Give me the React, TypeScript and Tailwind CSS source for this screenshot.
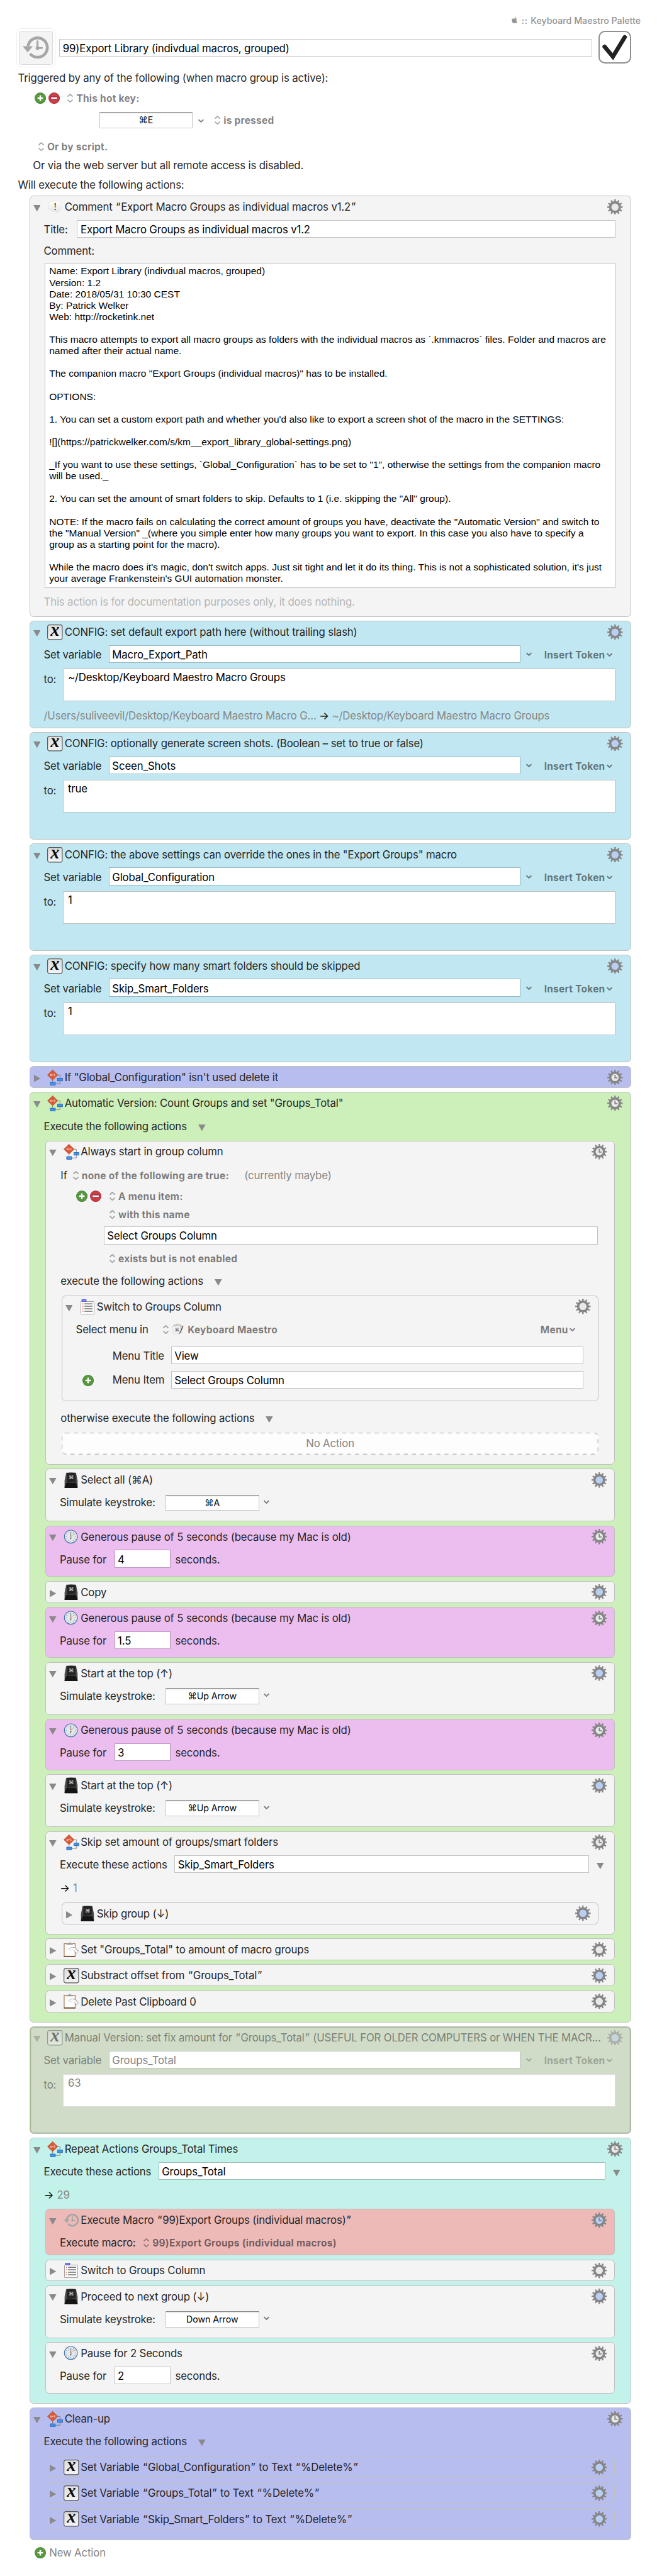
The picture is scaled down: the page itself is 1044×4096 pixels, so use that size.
import React from "react";
import { FaApple } from "react-icons/fa";

/* ---------- glyphs ---------- */

type Center = "plain" | "blue" | "clock" | "blueclock";

function Gear({ kind }: { kind: Center }) {
  const blue = kind === "blue" || kind === "blueclock";
  const clock = kind === "clock" || kind === "blueclock";
  return (
    <svg viewBox="0 0 38 38" className="h-[19px] w-[19px] shrink-0">
      {Array.from({ length: 12 }, (_, i) => (
        <rect key={i} x="17.2" y="0" width="3.6" height="8" fill="#868686" transform={`rotate(${i * 30} 19 19)`} />
      ))}
      <circle cx="19" cy="19" r="11.8" fill={blue ? "#b8cff3" : "#e9e9e9"} stroke="#868686" strokeWidth="5.6" />
      {clock && <path d="M19 12.5V20H25" fill="none" stroke="#868686" strokeWidth="2.8" />}
    </svg>
  );
}

function Down({ className = "" }: { className?: string }) {
  return (
    <svg viewBox="0 0 9 8" className={`h-[8px] w-[9px] shrink-0 ${className}`}>
      <path d="M0 0H9L4.5 8Z" fill="#8a8a8a" />
    </svg>
  );
}

function Right() {
  return (
    <svg viewBox="0 0 8 9" className="ml-[1px] h-[9px] w-[8px] shrink-0">
      <path d="M0 0V9L8 4.5Z" fill="#8a8a8a" />
    </svg>
  );
}

function Chevron({ className = "" }: { className?: string }) {
  return (
    <svg viewBox="0 0 7 5" className={`h-[5px] w-[7px] shrink-0 ${className}`}>
      <path d="M0.5 0.9L3.5 3.8L6.5 0.9" fill="none" stroke="#000" strokeOpacity="0.48" strokeWidth="1.6" />
    </svg>
  );
}

function UpDown({ className = "" }: { className?: string }) {
  return (
    <svg viewBox="0 0 7 11" className={`h-[11px] w-[7px] shrink-0 ${className}`}>
      <path d="M0.4 3.5L3.5 0.7L6.6 3.5M0.4 7.5L3.5 10.3L6.6 7.5" fill="none" stroke="#000" strokeOpacity="0.36" strokeWidth="1.3" />
    </svg>
  );
}

function Plus() {
  return (
    <svg viewBox="0 0 28 28" className="h-[14px] w-[14px] shrink-0">
      <circle cx="14" cy="14" r="13" fill="#5b9a3b" stroke="#4a8a3e" strokeWidth="2" />
      <path d="M10.5 5.5h7v5h5v7h-5v5h-7v-5h-5v-7h5z" fill="#478536" />
      <path d="M12 7h4v5h5v4h-5v5h-4v-5H7v-4h5z" fill="#fff" />
    </svg>
  );
}

function Minus() {
  return (
    <svg viewBox="0 0 28 28" className="h-[14px] w-[14px] shrink-0">
      <circle cx="14" cy="14" r="13" fill="#c64243" stroke="#b93045" strokeWidth="2" />
      <rect x="5" y="9.5" width="18" height="9" fill="#b02a3f" />
      <rect x="6.5" y="12" width="15" height="4" fill="#fff" />
    </svg>
  );
}

function HistoryIcon({ className }: { className: string }) {
  return (
    <svg viewBox="0 0 64 55" className={className}>
      <path d="M13.2 24A23.8 23.8 0 1 1 18.3 42.3" fill="none" stroke="#a6a6a6" strokeWidth="7" />
      <path d="M0 24H25L12.5 39Z" fill="#a6a6a6" />
      <circle cx="36.5" cy="28.5" r="4.6" fill="#a6a6a6" />
      <path d="M36.5 28V12M36 28.3H47.5" stroke="#a6a6a6" strokeWidth="4.6" strokeLinecap="round" />
    </svg>
  );
}

function XIcon() {
  return (
    <svg viewBox="0 0 38 38" className="h-[19px] w-[19px] overflow-visible">
      <defs>
        <linearGradient id="xg" x1="0" y1="0" x2="0" y2="1">
          <stop offset="0" stopColor="#dcdcdc" />
          <stop offset="1" stopColor="#f4f4f4" />
        </linearGradient>
      </defs>
      <rect x="1" y="1" width="36" height="36" rx="4.5" fill="url(#xg)" stroke="#555" strokeWidth="1.8" />
      <text x="19" y="28" textAnchor="middle" fontSize="44" fontStyle="italic" fontWeight="bold" fontFamily="Liberation Serif, serif" fill="#0b0b0b">
        x
      </text>
    </svg>
  );
}

function FlowIcon() {
  return (
    <svg viewBox="0 0 19 19" className="h-[19px] w-[19px] overflow-visible">
      <path d="M13 6.4h2.7v4.4M6.7 12.6v3.2M15.7 13.8v3.4H10" fill="none" stroke="#555" strokeWidth="0.5" />
      <path d="M6.7 0.2L13.1 6.4L6.7 12.6L0.3 6.4Z" fill="#dc5a33" stroke="#8a3a20" strokeWidth="0.4" />
      <text x="6.7" y="7.8" textAnchor="middle" fontSize="4.4" fontFamily="Liberation Serif, serif" fill="#fff">
        x=1
      </text>
      <rect x="12.8" y="10.4" width="6" height="3.4" fill="#3d93ee" stroke="#1c4f94" strokeWidth="0.5" />
      <rect x="3.8" y="15.5" width="6.2" height="3.4" fill="#3d93ee" stroke="#1c4f94" strokeWidth="0.5" />
    </svg>
  );
}

function KeyIcon() {
  return (
    <svg viewBox="0 0 34 39" className="h-[19.5px] w-[17px]">
      <path d="M5 1H29L33 20V37Q33 39 31 39H3Q1 39 1 37V20Z" fill="#4c4c4c" />
      <path d="M7 1.5Q17 0 28 1.5L28.5 23Q17 26 6.5 24Z" fill="#242424" />
      <path d="M6 25Q17 27 28.5 25L33 36V39H1V36Z" fill="#141414" />
      <text x="17.5" y="17" textAnchor="middle" fontSize="12.5" fontFamily="Inter, sans-serif" fill="#eee">
        ⌘
      </text>
    </svg>
  );
}

function ClockIcon() {
  return (
    <svg viewBox="0 0 36 36" className="h-[18px] w-[18px]">
      <circle cx="18" cy="18.6" r="16.4" fill="#7d8794" opacity="0.5" />
      <circle cx="18" cy="17.6" r="16" fill="#e6e7e6" stroke="#4a78ae" strokeWidth="1.8" />
      {Array.from({ length: 12 }, (_, i) => (
        <rect key={i} x="17.3" y="5" width="1.5" height="2.4" fill="#6b9fdc" transform={`rotate(${i * 30} 18 17.6)`} />
      ))}
      <path d="M18 17.6L26.5 9.5" stroke="#e58a6e" strokeWidth="1.2" />
      <path d="M18 7V17.6" stroke="#333" strokeWidth="1.2" />
      <path d="M16.6 19.5H19.4L18 26.5Z" fill="#333" />
    </svg>
  );
}

function MenuIcon() {
  return (
    <svg viewBox="0 0 34 37" className="h-[18.5px] w-[17px]">
      <rect x="0.6" y="5.5" width="32.8" height="31" rx="1.5" fill="#fff" stroke="#7d7d7d" strokeWidth="1.2" />
      <rect x="2.5" y="0" width="12" height="6" fill="#4f5fec" />
      <rect x="5" y="2.3" width="7" height="1.2" fill="#b9c0ff" />
      {[11, 17, 23.2, 29.4].map((y) => (
        <g key={y}>
          <rect x="4" y={y - 0.8} width="3" height="1.8" fill="#ee4a36" />
          <rect x="9.5" y={y - 0.8} width="20" height="1.7" fill="#3a3a3a" />
        </g>
      ))}
    </svg>
  );
}

function ClipIcon() {
  return (
    <svg viewBox="0 0 38 38" className="h-[19px] w-[19px]">
      <rect x="1.5" y="4" width="27" height="31.5" fill="#fff" stroke="#a5764b" strokeWidth="1.8" />
      <path d="M1 35.2H29" stroke="#6f4a2c" strokeWidth="2.6" />
      <path d="M7 6.5V3.4H12L13 1H17L18 3.4H23V6.5Z" fill="#9a9a9a" />
      <path d="M14 20C19 13 28 13 31.5 21" fill="none" stroke="#a9a9a9" strokeWidth="6" />
      <path d="M25.5 21L32.5 28.5L38 20Z" fill="#a9a9a9" />
      <path d="M14 20C19 14 27.5 14 31 22" fill="none" stroke="#fff" strokeWidth="4" />
      <path d="M27.5 22L32.4 26.8L36 21.4Z" fill="#fff" />
    </svg>
  );
}

function BubbleIcon() {
  return (
    <svg viewBox="0 0 36 34" className="h-[17px] w-[18px]">
      <defs>
        <linearGradient id="bg" x1="0" y1="0" x2="0" y2="1">
          <stop offset="0" stopColor="#ffffff" />
          <stop offset="1" stopColor="#e4e4e4" />
        </linearGradient>
      </defs>
      <path d="M18 1.5C28 1.5 35 7.5 35 15C35 21 30.5 26 25 27.8L25.5 32L19 29C8 29.5 1 23 1 15C1 7.5 8 1.5 18 1.5Z" fill="url(#bg)" stroke="#dcdcdc" strokeWidth="0.8" />
      <text x="18" y="24" textAnchor="middle" fontSize="27" fontFamily="Liberation Serif, serif" fill="#333">
        !
      </text>
    </svg>
  );
}

function MaestroIcon() {
  return (
    <svg viewBox="0 0 30 30" className="ml-[4px] h-[15px] w-[15px] shrink-0">
      <path d="M2 7Q9 -1 19 2L27 6L24 24L8 26Z" fill="#cbcbc4" />
      <path d="M1 8L20 5.5L25 24L5 28Z" fill="#f3f3f3" stroke="#c4c4c4" strokeWidth="0.8" />
      <text x="13" y="19.5" textAnchor="middle" fontSize="12" fontFamily="Inter, sans-serif" fill="#555">
        ⌘
      </text>
      <path d="M28 7L19 25" stroke="#2a2b33" strokeWidth="1.7" />
      <path d="M19 25L16.5 29" stroke="#bbb" strokeWidth="1.3" />
    </svg>
  );
}

/* ---------- building blocks ---------- */

type IconName = "x" | "flow" | "key" | "clock" | "menu" | "clip" | "bubble" | "history";

const ICONS: Record<IconName, React.ReactNode> = {
  x: <XIcon />,
  flow: <FlowIcon />,
  key: <KeyIcon />,
  clock: <ClockIcon />,
  menu: <MenuIcon />,
  clip: <ClipIcon />,
  bubble: <BubbleIcon />,
  history: <HistoryIcon className="h-[16px] w-[19px]" />,
};

/* Curly quotes get a little air on their outer side. */
function Quoted({ text }: { text: string }) {
  return (
    <>
      {text.split(/([“”])/).map((part, i) =>
        part === "“" || part === "”" ? (
          <span key={i} className="px-[0.7px]">
            {part}
          </span>
        ) : (
          part
        ),
      )}
    </>
  );
}

interface CardProps {
  title: string;
  icon: IconName;
  gear: Center;
  open?: boolean;
  dim?: boolean;
  className?: string;
  children?: React.ReactNode;
}

function Card({ title, icon, gear, open = true, dim = false, className = "h-[27px] bg-[#f4f4f4]", children }: CardProps) {
  return (
    <section className={`rounded-[5px] border border-[#bfbfbf] ${className}`}>
      <div className={`flex h-[26px] items-center pr-[9px] ${dim ? "opacity-50" : ""}`}>
        <div className="flex w-[21px] shrink-0 justify-start pl-[4px] pt-[3px]">{open ? <Down /> : <Right />}</div>
        <div className="flex w-[20px] shrink-0 justify-center">{ICONS[icon]}</div>
        <h2 className="ml-[1.7px] flex-1 truncate pt-[1.5px]">
          <Quoted text={title} />
        </h2>
        <div className="ml-[8px]">
          <Gear kind={gear} />
        </div>
      </div>
      {children}
    </section>
  );
}

function Field({ value, className = "mb-[2px]", dim = false }: { value: string; className?: string; dim?: boolean }) {
  return (
    <div className={`flex h-[22px] items-center border bg-white bg-clip-padding pl-[3.5px] pt-[3px] text-black ${dim ? "border-black/10" : "border-black/20"} ${className}`}>
      <span className={dim ? "opacity-50" : ""}>{value}</span>
    </div>
  );
}

function KeyField({ value }: { value: string }) {
  return (
    <div className="flex h-[20px] w-[115px] items-center justify-center border border-[#c6c6c6] border-t-[#858585] bg-white text-[11px] tracking-[-0.03px] text-black shadow-[inset_0_1px_0_#dedede]">
      {value}
    </div>
  );
}

function Bold({ children, className = "" }: { children: React.ReactNode; className?: string }) {
  return <span className={`pt-[1px] text-[12px] font-bold tracking-[0.18px] text-black/50 ${className}`}>{children}</span>;
}

function Label({ children, className = "" }: { children: React.ReactNode; className?: string }) {
  return <span className={`pt-[1px] ${className}`}>{children}</span>;
}

function SetVariable(props: { title: string; name: string; value: string; result?: boolean; dim?: boolean }) {
  const { title, name, value, result, dim = false } = props;
  const fade = dim ? "opacity-50" : "";
  return (
    <Card
      title={title}
      icon="x"
      gear="blue"
      dim={dim}
      className={dim ? "h-[132px] bg-[#d0dcc8] shadow-[inset_0_0_0_1px_#a3ba95]" : "h-[132px] bg-[#c1e8f2]"}
    >
      <div className="flex h-[30px] items-center pl-[17px]">
        <Label className={`w-[80px] ${fade}`}>Set variable</Label>
        <Field value={name} dim={dim} className="mb-[2px] w-[506px]" />
        <Chevron className={`mb-[1px] ml-[7px] ${fade}`} />
        <Bold className={`ml-[15.5px] ${fade}`}>Insert Token</Bold>
        <Chevron className={`ml-[2px] ${fade}`} />
      </div>
      <div className="mt-[2px] flex h-[40px] items-start pl-[17px]">
        <span className={`w-[24px] pt-[4px] ${fade}`}>to:</span>
        <div className={`h-[40px] w-[679px] border bg-white pl-[5px] pt-[1px] text-black ${dim ? "border-[#dcdcdc]" : "border-[#bfbfbf]"}`}>
          <span className={fade}>{value}</span>
        </div>
      </div>
      {result && (
        <div className="flex h-[36px] items-center gap-[3.5px] pl-[17px] pt-[1px] text-[#868686]">
          <span>/Users/suliveevil/Desktop/Keyboard Maestro Macro G...</span>
          <span className="text-black">→</span>
          <span>~/Desktop/Keyboard Maestro Macro Groups</span>
        </div>
      )}
    </Card>
  );
}

function Pause({ title, value, pink = true }: { title: string; value: string; pink?: boolean }) {
  return (
    <Card title={title} icon="clock" gear="clock" className={pink ? "h-[63px] bg-[#ecbeef]" : "h-[63px] bg-[#f4f4f4]"}>
      <div className="flex h-[30px] items-center pl-[17px]">
        <Label className="w-[67px]">Pause for</Label>
        <Field value={value} className="mb-[2px] w-[69px]" />
        <Label className="ml-[6px]">seconds.</Label>
      </div>
    </Card>
  );
}

function Keystroke({ title, value }: { title: string; value: string }) {
  return (
    <Card title={title} icon="key" gear="blue" className="h-[65px] bg-[#f4f4f4]">
      <div className="flex h-[30px] items-center pl-[17px]">
        <Label className="w-[130px]">Simulate keystroke:</Label>
        <KeyField value={value} />
        <Chevron className="mb-[2px] ml-[6px]" />
      </div>
    </Card>
  );
}

const GENEROUS = "Generous pause of 5 seconds (because my Mac is old)";

const COMMENT = `Name: Export Library (indivdual macros, grouped)
Version: 1.2
Date: 2018/05/31 10:30 CEST
By: Patrick Welker
Web: http://rocketink.net

This macro attempts to export all macro groups as folders with the individual macros as \`.kmmacros\` files. Folder and macros are
named after their actual name.

The companion macro "Export Groups (individual macros)" has to be installed.

OPTIONS:

1. You can set a custom export path and whether you'd also like to export a screen shot of the macro in the SETTINGS:

![](https://patrickwelker.com/s/km__export_library_global-settings.png)

_If you want to use these settings, \`Global_Configuration\` has to be set to "1", otherwise the settings from the companion macro
will be used._

2. You can set the amount of smart folders to skip. Defaults to 1 (i.e. skipping the "All" group).

NOTE: If the macro fails on calculating the correct amount of groups you have, deactivate the "Automatic Version" and switch to
the "Manual Version" _(where you simple enter how many groups you want to export. In this case you also have to specify a
group as a starting point for the macro).

While the macro does it's magic, don't switch apps. Just sit tight and let it do its thing. This is not a sophisticated solution, it's just
your average Frankenstein's GUI automation monster.`;

/* ---------- page sections ---------- */

function Header() {
  return (
    <header className="h-[241px] shrink-0">
      <div className="flex h-[35px] items-center justify-end pr-[20px] pt-[16px] text-[11px] font-medium tracking-[0px] text-[#949494]">
        <FaApple className="mb-[1px] mr-[5px] h-[9px] w-[7px]" />
        <span className="mr-[3.5px] tracking-[0.5px]">::</span>
        <span>Keyboard Maestro Palette</span>
      </div>
      <div className="flex h-[48px] items-center pl-[20px]">
        <div className="flex h-[48px] w-[48px] items-center justify-center rounded-[6px] border border-[#ededed]">
          <div className="flex h-[42px] w-[42px] items-center justify-center rounded-[3px] border border-[#dadada] bg-[#f4f4f4]">
            <HistoryIcon className="h-[27.5px] w-[32px]" />
          </div>
        </div>
        <Field value="99)Export Library (indivdual macros, grouped)" className="ml-[5px] w-[655px]" />
        <div className="mb-[2px] ml-[8px] h-[40px] w-[40px] rounded-[8px] border-[1.6px] border-[#909090]">
          <svg viewBox="1.3 1.3 37.4 37.4" className="h-full w-full">
            <path d="M7.3 19.5L17.7 32L32.5 7.6" fill="none" stroke="#222" strokeWidth="5.2" strokeLinecap="round" strokeMiterlimit="6" />
          </svg>
        </div>
      </div>
      <p className="h-[24px] pl-[22px] pt-[4px]">Triggered by any of the following (when macro group is active):</p>
      <div className="flex h-[28px] items-center pl-[42.5px]">
        <Plus />
        <span className="w-[3px]" />
        <Minus />
        <UpDown className="ml-[9.5px]" />
        <Bold className="ml-[4px]">This hot key:</Bold>
      </div>
      <div className="flex h-[26px] items-center pl-[122px]">
        <KeyField value="⌘E" />
        <Chevron className="ml-[7px] mt-[2px]" />
        <UpDown className="ml-[13px]" />
        <Bold className="ml-[4px]">is pressed</Bold>
      </div>
      <div className="flex h-[34px] items-center pl-[47px] pt-[5px]">
        <UpDown />
        <Bold className="ml-[4px]">Or by script.</Bold>
      </div>
      <p className="flex h-[18px] items-center pl-[40.5px]">Or via the web server but all remote access is disabled.</p>
      <p className="flex h-[28px] items-center pl-[22px] pt-[3px]">Will execute the following actions:</p>
    </header>
  );
}

function CommentCard() {
  return (
    <Card title="Comment “Export Macro Groups as individual macros v1.2”" icon="bubble" gear="plain" className="h-[518px] bg-[#f4f4f4]">
      <div className="flex h-[30px] items-center pl-[17px]">
        <Label className="w-[41px]">Title:</Label>
        <Field value="Export Macro Groups as individual macros v1.2" className="mb-[2px] w-[662px]" />
      </div>
      <p className="flex h-[23px] items-center pl-[17px]">Comment:</p>
      <pre className="ml-[18px] mt-[3px] h-[400px] w-[702px] border border-[#bfbfbf] bg-white pl-[5px] pt-[2.5px] font-['Liberation_Sans',sans-serif] text-[12px] leading-[14px] tracking-[0px] text-black">
        {COMMENT}
      </pre>
      <p className="flex h-[35px] items-center pl-[17px] pt-[1px] text-[#b5b5b5]">This action is for documentation purposes only, it does nothing.</p>
    </Card>
  );
}

function GroupColumnCard() {
  return (
    <Card title="Always start in group column" icon="flow" gear="clock" className="h-[399px] bg-[#f4f4f4]">
      <div className="flex h-[32px] items-center pl-[18px]">
        <Label className="w-[15px]">If</Label>
        <UpDown />
        <Bold className="ml-[4px] w-[200px]">none of the following are true:</Bold>
        <Label className="text-[#868686]">(currently maybe)</Label>
      </div>
      <div className="flex h-[20px] items-center pl-[37.5px]">
        <Plus />
        <span className="w-[3px]" />
        <Minus />
        <UpDown className="ml-[9.5px]" />
        <Bold className="ml-[4px]">A menu item:</Bold>
      </div>
      <div className="flex h-[24px] items-center pl-[78px]">
        <UpDown />
        <Bold className="ml-[4px]">with this name</Bold>
      </div>
      <div className="pl-[71px] pt-[3px]">
        <Field value="Select Groups Column" className="mb-[2px] w-[608px]" />
      </div>
      <div className="flex h-[31px] items-center pl-[78px]">
        <UpDown />
        <Bold className="ml-[4px]">exists but is not enabled</Bold>
      </div>
      <p className="flex h-[25px] items-center pl-[18px] pt-[1px]">
        execute the following actions <Down className="ml-[14px] mt-[2px]" />
      </p>
      <div className="px-[19px] pt-[5px]">
        <Card title="Switch to Groups Column" icon="menu" gear="plain" className="h-[130px] bg-[#f4f4f4]">
          <div className="flex h-[30px] items-center pl-[17px]">
            <Label className="w-[107px]">Select menu in</Label>
            <UpDown />
            <MaestroIcon />
            <Bold className="ml-[4.5px] flex-1">Keyboard Maestro</Bold>
            <Bold>Menu</Bold>
            <Chevron className="ml-[2px] mr-[28px]" />
          </div>
          <div className="flex h-[30px] items-center pl-[62px] pt-[6px]">
            <span className="w-[72px]">Menu Title</span>
            <Field value="View" className="mb-[2px] w-[507px]" />
          </div>
          <div className="flex h-[30px] items-center pl-[25px] pt-[6px]">
            <Plus />
            <span className="ml-[23px] w-[72px]">Menu Item</span>
            <Field value="Select Groups Column" className="mb-[2px] w-[507px]" />
          </div>
        </Card>
      </div>
      <p className="flex h-[39px] items-center pl-[18px] pt-[4px]">
        otherwise execute the following actions <Down className="ml-[14px] mt-[2px]" />
      </p>
      <div className="relative mx-[19px] flex h-[27px] items-center justify-center rounded-[5px] bg-[#fdfdfd] pt-[1px] text-[#868686]">
        <svg className="absolute inset-0 h-full w-full">
          <rect x="0.5" y="0.5" width="659" height="26" rx="4.5" fill="none" stroke="#bfbfbf" strokeDasharray="5 5" />
        </svg>
        No Action
      </div>
    </Card>
  );
}

function CountLoop({ name, fieldClass, result }: { name: string; fieldClass: string; result: string }) {
  return (
    <>
      <div className="flex h-[30px] items-center pl-[17px]">
        <Label className="w-[141px]">Execute these actions</Label>
        <Field value={name} className={fieldClass} />
        <Down className="ml-[9px] mt-[3px]" />
      </div>
      <p className="flex h-[27px] items-center gap-[4px] pl-[17px] pt-[1px] text-[#868686]">
        <span className="text-black">→</span>
        <span>{result}</span>
      </p>
    </>
  );
}

function SkipCard() {
  return (
    <Card title="Skip set amount of groups/smart folders" icon="flow" gear="clock" className="h-[127px] bg-[#f4f4f4]">
      <CountLoop name="Skip_Smart_Folders" fieldClass="mb-[2px] w-[510px]" result="1" />
      <div className="px-[19px] pt-[4px]">
        <Card title="Skip group (↓)" icon="key" gear="blue" open={false} />
      </div>
    </Card>
  );
}

const LILAC = "h-[27px] bg-[#b8bdef]";

export default function App() {
  return (
    <div className="flex h-[3170px] w-[808px] flex-col bg-white font-[Inter,sans-serif] text-[13px] leading-[20px] tracking-[-0.115px] text-[#262626] [zoom:1.292]">
      <Header />
      <main className="ml-[36px] flex w-[740px] flex-col gap-[5px]">
        <CommentCard />
        <SetVariable title="CONFIG: set default export path here (without trailing slash)" name="Macro_Export_Path" value="~/Desktop/Keyboard Maestro Macro Groups" result />
        <SetVariable title="CONFIG: optionally generate screen shots. (Boolean – set to true or false)" name="Sceen_Shots" value="true" />
        <SetVariable title={'CONFIG: the above settings can override the ones in the "Export Groups" macro'} name="Global_Configuration" value="1" />
        <SetVariable title="CONFIG: specify how many smart folders should be skipped" name="Skip_Smart_Folders" value="1" />
        <Card title={'If "Global_Configuration" isn\'t used delete it'} icon="flow" gear="clock" open={false} className={LILAC} />

        <Card title={'Automatic Version: Count Groups and set "Groups_Total"'} icon="flow" gear="clock" className="h-[1145px] bg-[#cdf0bb]">
          <p className="flex h-[31px] items-center pl-[17px] pt-[1px]">
            Execute the following actions <Down className="ml-[14px] mt-[2px]" />
          </p>
          <div className="flex flex-col gap-[5px] px-[19px] pt-[2px]">
            <GroupColumnCard />
            <Keystroke title="Select all (⌘A)" value="⌘A" />
            <Pause title={GENEROUS} value="4" />
            <Card title="Copy" icon="key" gear="blue" open={false} />
            <Pause title={GENEROUS} value="1.5" />
            <Keystroke title="Start at the top (↑)" value="⌘Up Arrow" />
            <Pause title={GENEROUS} value="3" />
            <Keystroke title="Start at the top (↑)" value="⌘Up Arrow" />
            <SkipCard />
            <Card title={'Set "Groups_Total" to amount of macro groups'} icon="clip" gear="plain" open={false} />
            <Card title="Substract offset from “Groups_Total”" icon="x" gear="blue" open={false} />
            <Card title="Delete Past Clipboard 0" icon="clip" gear="plain" open={false} />
          </div>
        </Card>

        <SetVariable title="Manual Version: set fix amount for “Groups_Total” (USEFUL FOR OLDER COMPUTERS or WHEN THE MACR..." name="Groups_Total" value="63" dim />

        <Card title="Repeat Actions Groups_Total Times" icon="flow" gear="clock" className="h-[327px] bg-[#c3f2ea]">
          <CountLoop name="Groups_Total" fieldClass="mb-[2px] w-[550px]" result="29" />
          <div className="flex flex-col gap-[5px] px-[19px] pt-[4px]">
            <Card title="Execute Macro “99)Export Groups (individual macros)”" icon="history" gear="blueclock" className="h-[57px] bg-[#edbab8]">
              <div className="flex h-[30px] items-center pl-[17px]">
                <Label className="w-[103px]">Execute macro:</Label>
                <UpDown />
                <Bold className="ml-[4px]">99)Export Groups (individual macros)</Bold>
              </div>
            </Card>
            <Card title="Switch to Groups Column" icon="menu" gear="plain" open={false} />
            <Keystroke title="Proceed to next group (↓)" value="Down Arrow" />
            <Pause title="Pause for 2 Seconds" value="2" pink={false} />
          </div>
        </Card>

        <Card title="Clean-up" icon="flow" gear="clock" className="h-[163px] bg-[#b8bdef]">
          <p className="flex h-[31px] items-center pl-[17px] pt-[1px]">
            Execute the following actions <Down className="ml-[14px] mt-[2px]" />
          </p>
          <div className="flex flex-col gap-[5px] px-[19px] pt-[2px]">
            <Card title="Set Variable “Global_Configuration” to Text “%Delete%”" icon="x" gear="blue" open={false} className={LILAC} />
            <Card title="Set Variable “Groups_Total” to Text “%Delete%”" icon="x" gear="blue" open={false} className={LILAC} />
            <Card title="Set Variable “Skip_Smart_Folders” to Text “%Delete%”" icon="x" gear="blue" open={false} className={LILAC} />
          </div>
        </Card>
      </main>
      <footer className="flex h-[32px] items-center gap-[4px] pl-[42.5px] text-[#868686]">
        <Plus />
        <span className="pt-[1px]">New Action</span>
      </footer>
    </div>
  );
}
